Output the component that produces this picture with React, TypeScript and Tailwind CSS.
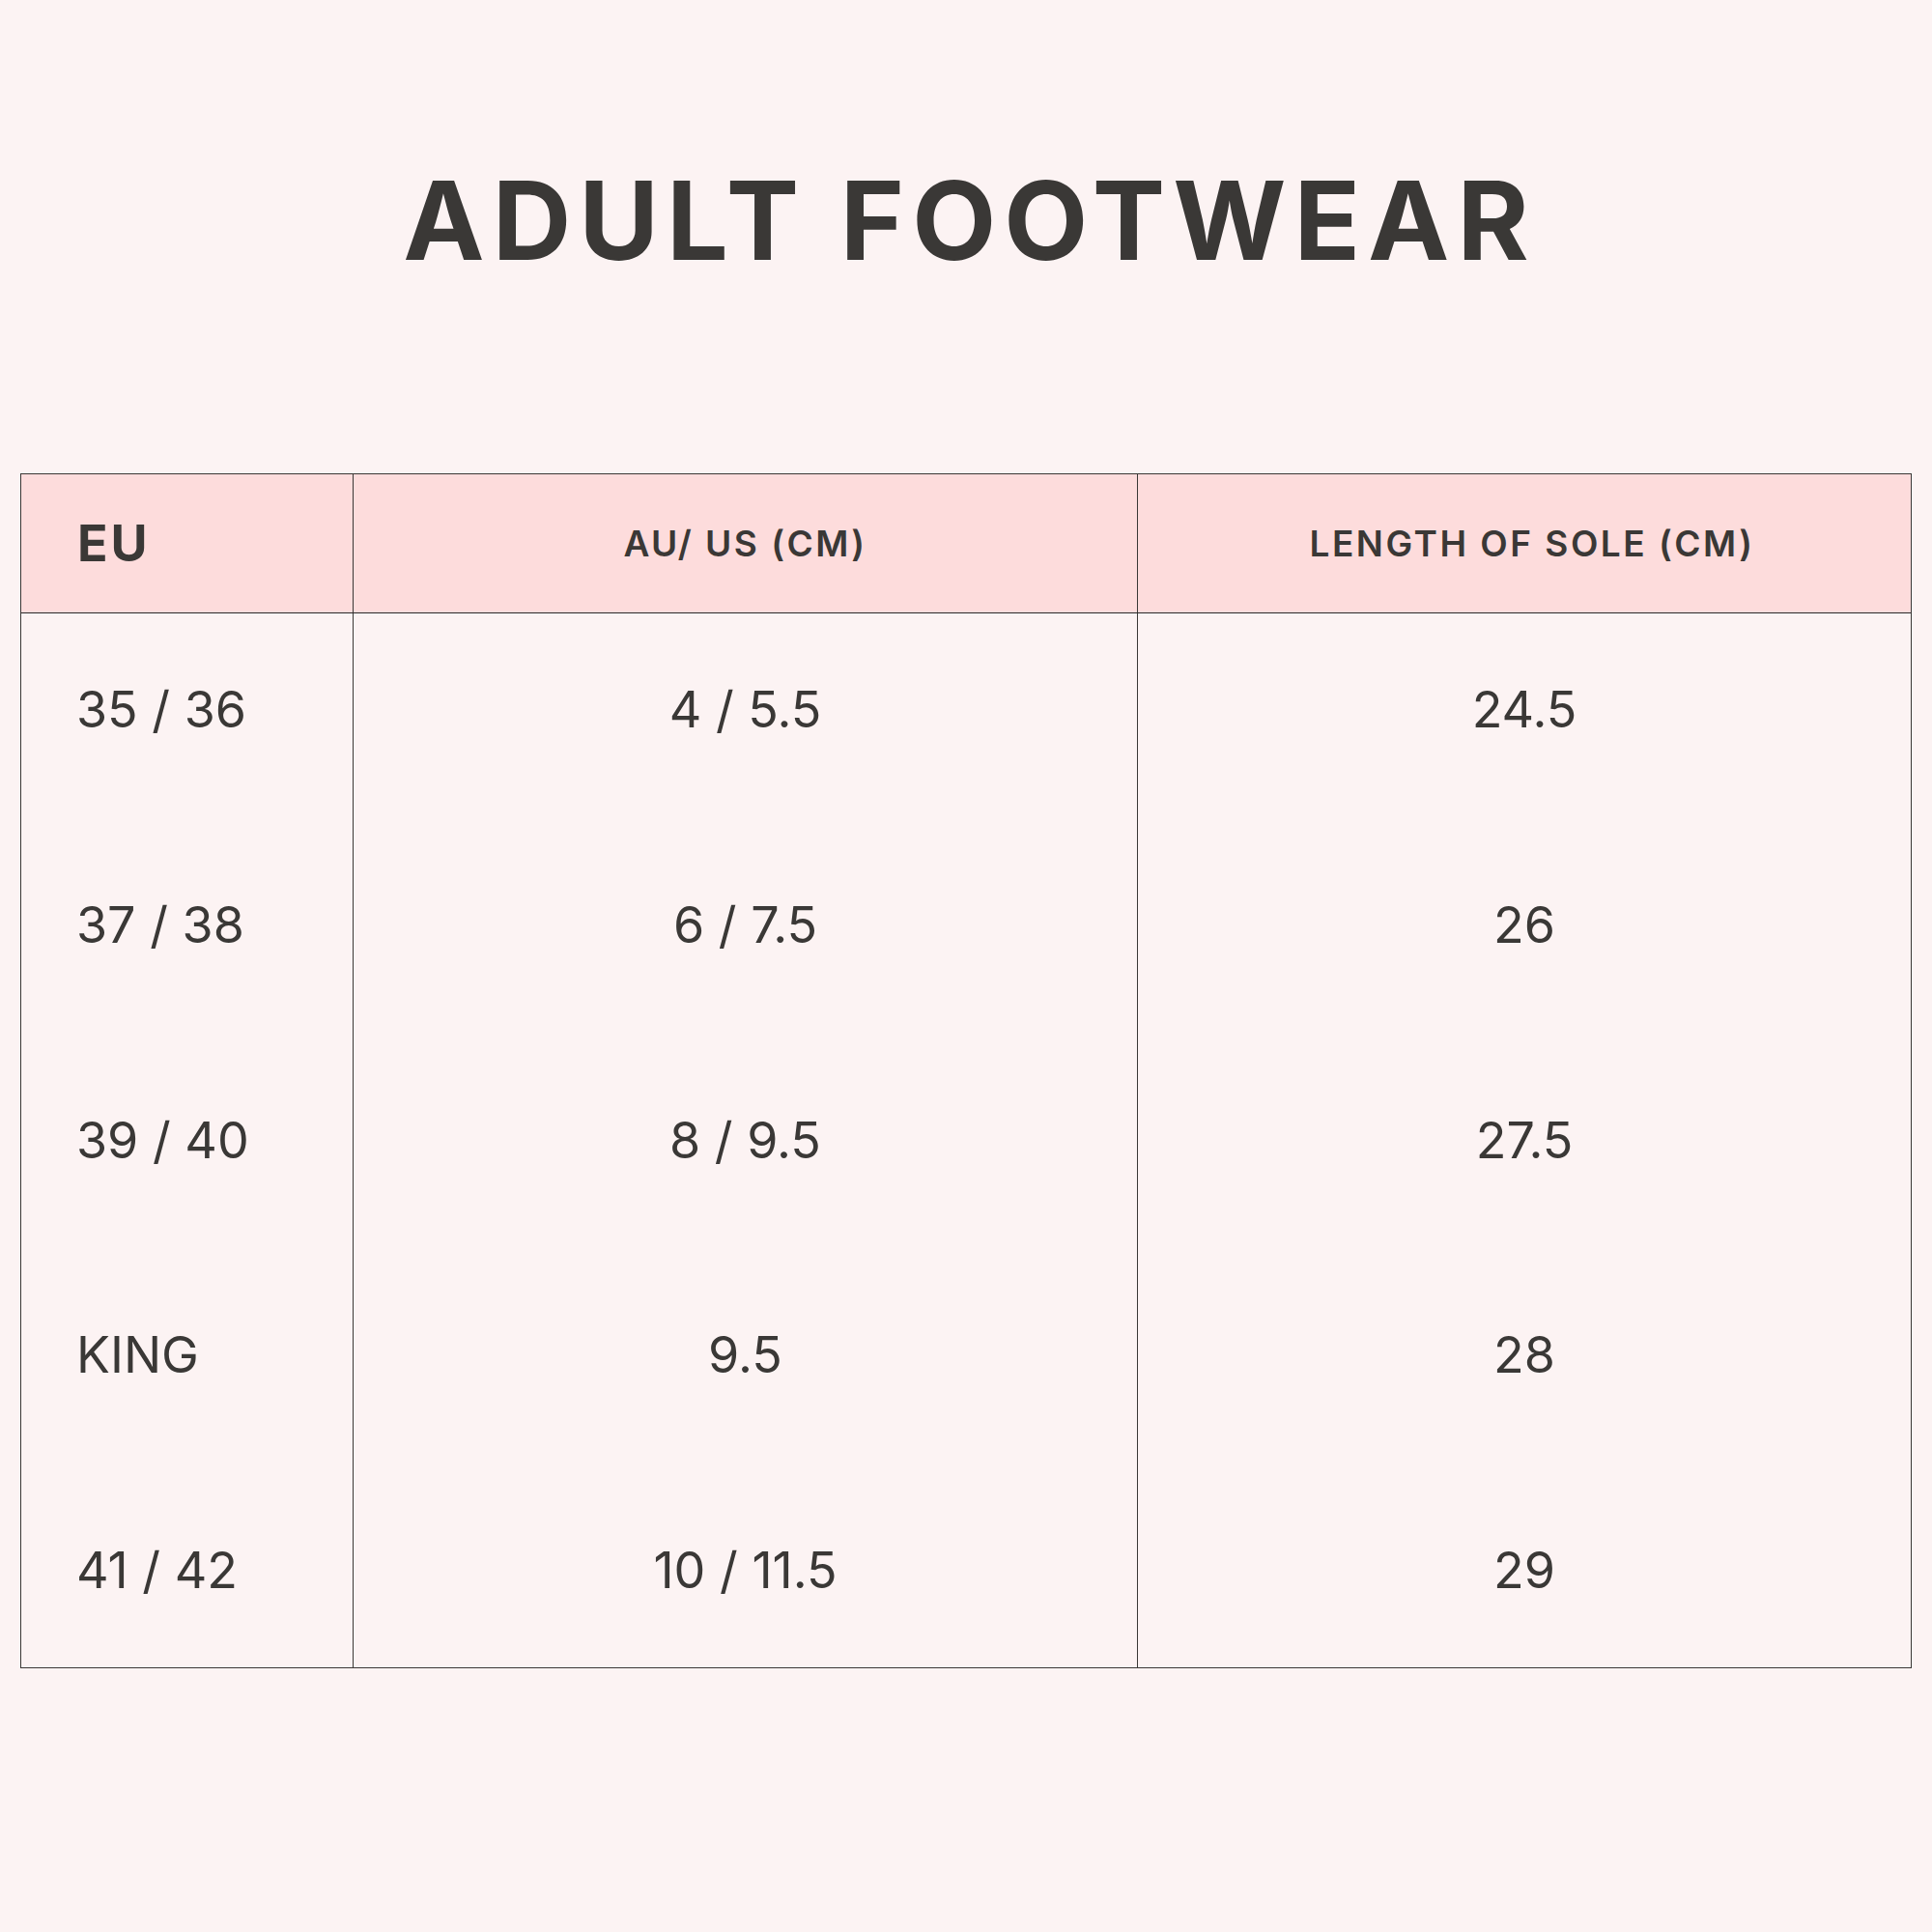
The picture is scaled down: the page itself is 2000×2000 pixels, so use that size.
const rows = [
  { eu: "35 / 36", au: "4 / 5.5", sole: "24.5" },
  { eu: "37 / 38", au: "6 / 7.5", sole: "26" },
  { eu: "39 / 40", au: "8 / 9.5", sole: "27.5" },
  { eu: "KING", au: "9.5", sole: "28" },
  { eu: "41 / 42", au: "10 / 11.5", sole: "29" },
];

const font = { fontFamily: "Inter, 'Noto Sans', sans-serif" };

export default function App() {
  return (
    <div className="w-[2000px] h-[2000px] bg-[#fcf3f3] text-[#3a3836]" style={font}>
      <h1 className="pt-[172px] pl-[8px] text-center text-[113px] font-bold leading-none tracking-[8px]">
        ADULT FOOTWEAR
      </h1>

      <div className="mt-[205px] ml-[21px] w-[1958px] border border-[#3a3836]">
        {/* header */}
        <div className="grid h-[144px] grid-cols-[344px_812px_1fr] border-b border-[#2a2a2a] bg-[#fddcdc]">
          <div className="flex items-center border-r border-[#3a3836] pl-[58px] text-[52px] font-bold leading-none tracking-[3px]">
            EU
          </div>
          <div className="flex items-center justify-center border-r border-[#3a3836] text-[37px] font-semibold leading-none tracking-[2.5px]">
            AU/ US (CM)
          </div>
          <div className="flex items-center justify-center pl-[16px] text-[37px] font-semibold leading-none tracking-[2.5px]">
            LENGTH OF SOLE (CM)
          </div>
        </div>

        {/* body */}
        <div className="grid h-[1091px] grid-cols-[344px_812px_1fr] text-[52px] leading-none">
          <div className="flex flex-col justify-between border-r border-[#3a3836] py-[74px] pl-[57px]">
            {rows.map((r) => (
              <div key={r.eu} className="h-[52px]">{r.eu}</div>
            ))}
          </div>
          <div className="flex flex-col items-center justify-between border-r border-[#3a3836] py-[74px]">
            {rows.map((r) => (
              <div key={r.eu} className="h-[52px]">{r.au}</div>
            ))}
          </div>
          <div className="flex flex-col items-center justify-between py-[74px]">
            {rows.map((r) => (
              <div key={r.eu} className="h-[52px]">{r.sole}</div>
            ))}
          </div>
        </div>
      </div>
    </div>
  );
}
